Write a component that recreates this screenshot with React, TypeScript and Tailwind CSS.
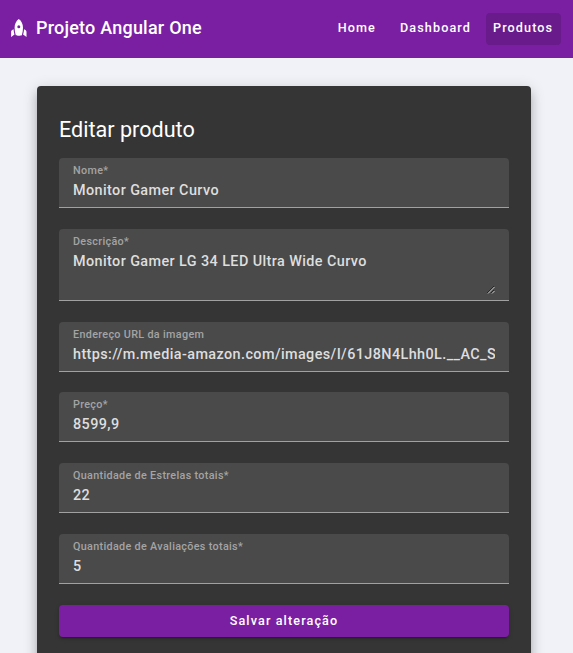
type FieldProps = { label: string; value: string; className?: string; multiline?: boolean };

function Field({ label, value, className = '', multiline = false }: FieldProps) {
  return (
    <label
      className={`relative block w-full rounded-t-[4px] border-b border-[#a1a1a1] bg-[#4a4a4a] px-[14px] ${
        multiline ? 'h-[72px]' : 'h-[50px]'
      } ${className}`}
    >
      <span className="block pt-[6px] text-[10.8px] leading-[14px] font-medium tracking-[0.32px] text-[#a4a4a4]">
        {label}
      </span>
      {multiline ? (
        <>
          <textarea
            className="block h-[42px] w-full resize-none overflow-hidden bg-transparent pt-[2px] text-[14.4px] leading-[22px] font-medium tracking-[0.41px] text-[#dedede] outline-none"
            defaultValue={value}
          />
          <svg className="absolute right-[14px] bottom-[6px]" width="8" height="8" viewBox="0 0 8 8" strokeWidth="0.9">
            <path d="M0 7 7 0M4 7 7 4" stroke="#222" />
            <path d="M1 7.5 7.5 1M5 7.5 7.5 5" stroke="#dcdcdc" />
          </svg>
        </>
      ) : (
        <input
          className="block h-[24px] w-full bg-transparent text-[14.4px] leading-[22px] font-medium tracking-[0.41px] text-[#dedede] outline-none"
          defaultValue={value}
        />
      )}
    </label>
  );
}

function Rocket() {
  return (
    <svg className="relative -top-px" width="16" height="20" viewBox="0 0 16 20" fill="#fff">
      <path
        fillRule="evenodd"
        d="M7.8 1C10.4 2.8 12 6 12 9.8c0 2.6-.4 5-1.2 7.4-1 .6-5 .6-6 0C4 14.800 3.6 12.400 3.6 9.800 3.600 6 5.200 2.800 7.800 1ZM7.8 7.300a1.500 1.500 0 1 0 0 3 1.500 1.500 0 0 0 0-3Z"
      />
      <path d="M2.600 11.300c.1 2.200.4 3.700.9 5.100L.1 18.900v-4.900c0-1.300 1.100-2.300 2.500-2.700ZM13 11.300c-.1 2.200-.4 3.700-.9 5.100l3.400 2.500v-4.900c0-1.300-1.100-2.300-2.500-2.700Z" />
    </svg>
  );
}

const navItem = 'flex h-8 items-center rounded-[4px] px-[7px] pb-px text-[12.6px] font-medium tracking-[1.12px] text-white';

export default function App() {
  return (
    <div className="h-[653px] w-full overflow-hidden bg-[#f1f2f8] font-['Roboto',sans-serif]">
      <header className="flex h-[58px] items-center bg-[#7b1fa2] pr-[12px] pl-[11px] text-white">
        <Rocket />
        <span className="ml-[9px] pb-[2px] text-[18px] leading-8 font-medium tracking-[0.22px] whitespace-nowrap">
          Projeto Angular One
        </span>
        <nav className="ml-auto flex">
          <a className={`${navItem} mr-[10px]`}>Home</a>
          <a className={`${navItem} mr-[8px]`}>Dashboard</a>
          <a className={`${navItem} w-[75px] bg-[#691b8b]`}>Produtos</a>
        </nav>
      </header>
      <main className="px-[37px] pt-7">
        <form className="h-[620px] w-[494px] rounded-[4px] bg-[#353535] px-[22px] pt-7 shadow-[0_5px_5px_-3px_rgba(0,0,0,0.2),0_8px_10px_1px_rgba(0,0,0,0.14),0_3px_14px_2px_rgba(0,0,0,0.12)]">
          <h1 className="mb-[14px] h-[30px] text-[21.6px] leading-[32px] font-normal text-white">Editar produto</h1>
          <Field label="Nome*" value="Monitor Gamer Curvo" />
          <Field className="mt-[21px]" label="Descrição*" value="Monitor Gamer LG 34 LED Ultra Wide Curvo" multiline />
          <Field
            className="mt-[21px]"
            label="Endereço URL da imagem"
            value="https://m.media-amazon.com/images/I/61J8N4Lhh0L.__AC_SX300_SY300.jpg"
          />
          <Field className="mt-[20px]" label="Preço*" value="8599,9" />
          <Field className="mt-[21px]" label="Quantidade de Estrelas totais*" value="22" />
          <Field className="mt-[21px]" label="Quantidade de Avaliações totais*" value="5" />
          <button
            type="button"
            className="mt-[21px] flex h-8 w-full items-center justify-center rounded-[4px] bg-[#7b1fa2] text-[12.6px] font-medium tracking-[1.12px] text-white shadow-[0_3px_1px_-2px_rgba(0,0,0,0.2),0_2px_2px_0_rgba(0,0,0,0.14),0_1px_5px_0_rgba(0,0,0,0.12)]"
          >
            Salvar alteração
          </button>
        </form>
      </main>
    </div>
  );
}
